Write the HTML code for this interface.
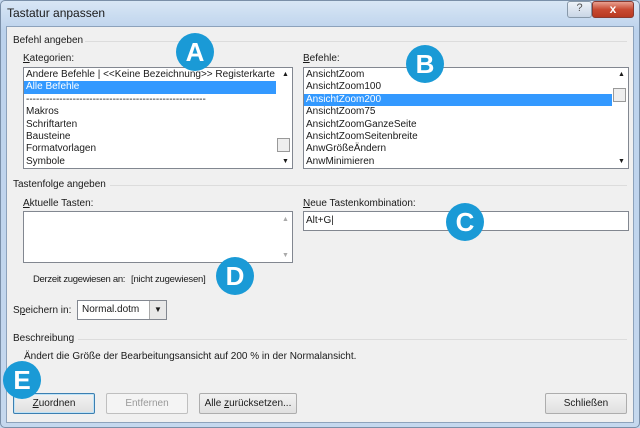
<!DOCTYPE html><html><head><meta charset="utf-8"><style>
*{box-sizing:border-box;margin:0;padding:0}
body{width:640px;height:428px;overflow:hidden;background:#c4d7ee;font-family:"Liberation Sans",sans-serif;font-size:10px;color:#1a1a1a;position:relative}
.a{position:absolute;white-space:nowrap}
.frame{position:absolute;left:0;top:0;width:640px;height:428px;background:linear-gradient(#d8e6f5,#bcd2ec 30px,#c5d8ee);border:1px solid #7a8fa8;border-radius:5px}
.client{position:absolute;left:6px;top:26px;width:628px;height:397px;background:#f0f0f0;border:1px solid #8da2bb}
.list{position:absolute;background:#fff;border:1px solid #828790;overflow:hidden}
.list div{height:12.4px;line-height:12.4px;padding-left:2px}
.sel{background:#3399ff;color:#fff}
.sb{position:absolute;right:0;top:0;bottom:0;width:16px;background:#fff}
.badge{position:absolute;width:38px;height:38px;border-radius:50%;background:#1a9ad6;color:#fff;font-weight:bold;font-size:26px;text-align:center;line-height:38px}
.btn{position:absolute;height:21px;border:1px solid #adadad;border-radius:2px;background:linear-gradient(#f2f2f2,#e0e0e0);text-align:center;line-height:19px}
.line{position:absolute;height:1px;background:#dcdcdc}
</style></head><body>
<div class="frame"></div>
<div class="a" style="left:7px;top:6px;font-size:12px">Tastatur anpassen</div>
<div class="a" style="left:567px;top:1px;width:25px;height:17px;border:1px solid #8899aa;border-radius:3px;background:linear-gradient(#eef3f9,#c9d6e6);text-align:center;font-size:11px;color:#555">?</div>
<div class="a" style="left:592px;top:1px;width:42px;height:17px;border:1px solid #8a3a30;border-radius:3px;background:linear-gradient(#e8a090,#c84a32 50%,#b83a22);text-align:center;color:#fff;font-weight:bold;font-size:12px;line-height:15px">x</div>
<div class="client"></div>
<div class="a" style="left:13px;top:35px">Befehl angeben</div><div class="line" style="left:85px;top:41px;width:542px"></div>
<div class="a" style="left:23px;top:53px"><u>K</u>ategorien:</div>
<div class="list" style="left:23px;top:67px;width:270px;height:102px;padding-top:1px">
<div>Andere Befehle | &lt;&lt;Keine Bezeichnung&gt;&gt; Registerkarte</div><div class="sel" style="margin-right:16px">Alle Befehle</div><div>------------------------------------------------------</div><div>Makros</div><div>Schriftarten</div><div>Bausteine</div><div>Formatvorlagen</div><div>Symbole</div>
<div class="sb"><div class="a" style="left:4px;top:1px;font-size:7px">▲</div><div class="a" style="left:1px;top:70px;width:13px;height:14px;border:1px solid #999;background:#eee"></div><div class="a" style="left:4px;top:88px;font-size:7px">▼</div></div></div>
<div class="a" style="left:303px;top:53px"><u>B</u>efehle:</div>
<div class="list" style="left:303px;top:67px;width:326px;height:102px;padding-top:1px">
<div>AnsichtZoom</div><div>AnsichtZoom100</div><div class="sel" style="margin-right:16px">AnsichtZoom200</div><div>AnsichtZoom75</div><div>AnsichtZoomGanzeSeite</div><div>AnsichtZoomSeitenbreite</div><div>AnwGrößeÄndern</div><div>AnwMinimieren</div>
<div class="sb"><div class="a" style="left:4px;top:1px;font-size:7px">▲</div><div class="a" style="left:1px;top:20px;width:13px;height:14px;border:1px solid #999;background:#eee"></div><div class="a" style="left:4px;top:88px;font-size:7px">▼</div></div></div>
<div class="a" style="left:13px;top:179px">Tastenfolge angeben</div><div class="line" style="left:110px;top:185px;width:517px"></div>
<div class="a" style="left:23px;top:198px"><u>A</u>ktuelle Tasten:</div>
<div class="list" style="left:23px;top:211px;width:270px;height:52px"><div class="sb"><div class="a" style="left:4px;top:2px;font-size:7px;color:#aaa">▲</div><div class="a" style="left:4px;top:38px;font-size:7px;color:#aaa">▼</div></div></div>
<div class="a" style="left:303px;top:198px"><u>N</u>eue Tastenkombination:</div>
<div class="list" style="left:303px;top:211px;width:326px;height:20px;padding:3px 2px">Alt+G|</div>
<div class="a" style="left:33px;top:274px;font-size:9.5px;letter-spacing:-0.3px">Derzeit zugewiesen an:</div><div class="a" style="left:131px;top:274px;font-size:9.5px;letter-spacing:-0.2px">[nicht zugewiesen]</div>
<div class="a" style="left:13px;top:305px">S<u>p</u>eichern in:</div>
<div class="list" style="left:77px;top:300px;width:90px;height:20px;padding:3px 4px">Normal.dotm<div class="a" style="right:0;top:0;width:17px;height:18px;border-left:1px solid #aaa;background:#e8e8e8;font-size:8px;text-align:center;line-height:18px;padding:0">▼</div></div>
<div class="a" style="left:13px;top:333px">Beschreibung</div><div class="line" style="left:78px;top:339px;width:549px"></div>
<div class="a" style="left:24px;top:351px">Ändert die Größe der Bearbeitungsansicht auf 200 % in der Normalansicht.</div>
<div class="btn" style="left:13px;top:393px;width:82px;border-color:#3c7fb1;box-shadow:inset 0 0 0 1px #bfe3f7"><u>Z</u>uordnen</div>
<div class="btn" style="left:106px;top:393px;width:82px;color:#999;background:#f4f4f4;border-color:#bfbfbf">Entfernen</div>
<div class="btn" style="left:199px;top:393px;width:98px">Alle <u>z</u>urücksetzen...</div>
<div class="btn" style="left:545px;top:393px;width:82px">Schließen</div>
<div class="badge" style="left:176px;top:33px">A</div>
<div class="badge" style="left:406px;top:45px">B</div>
<div class="badge" style="left:446px;top:203px">C</div>
<div class="badge" style="left:216px;top:257px">D</div>
<div class="badge" style="left:3px;top:361px">E</div>
</body></html>
